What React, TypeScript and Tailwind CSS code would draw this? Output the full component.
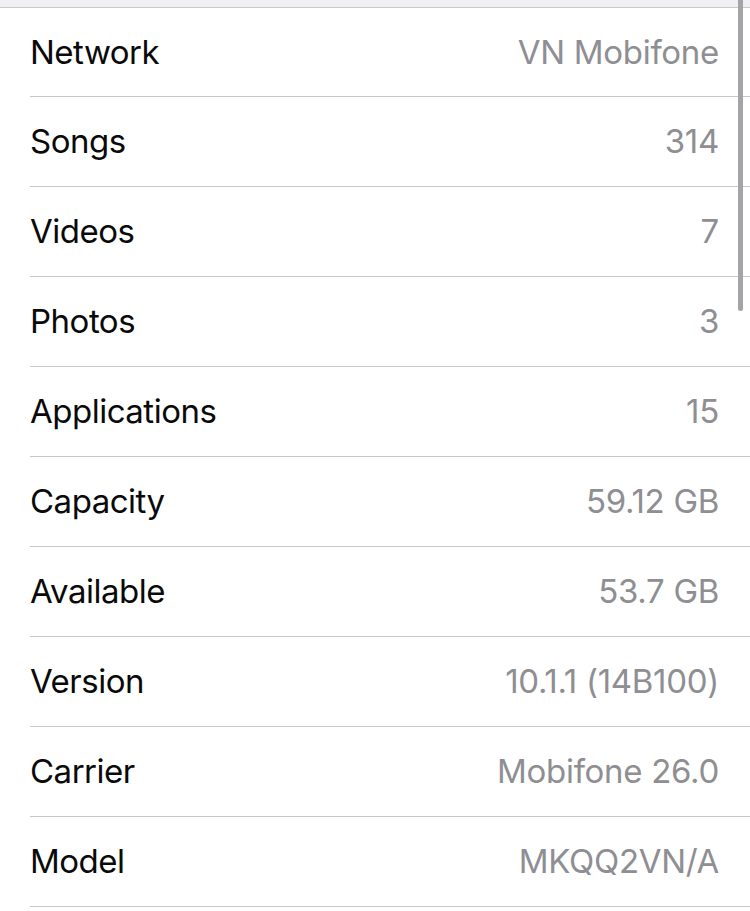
import React from "react";

const rows: [string, string][] = [
  ["Network", "VN Mobifone"],
  ["Songs", "314"],
  ["Videos", "7"],
  ["Photos", "3"],
  ["Applications", "15"],
  ["Capacity", "59.12 GB"],
  ["Available", "53.7 GB"],
  ["Version", "10.1.1 (14B100)"],
  ["Carrier", "Mobifone 26.0"],
  ["Model", "MKQQ2VN/A"],
];

export default function App() {
  return (
    <div
      className="relative w-[750px] h-[911px] overflow-hidden bg-white"
      style={{ fontFamily: "Inter, 'Liberation Sans', sans-serif" }}
    >
      <div className="h-[8px] bg-[#efeff4] border-b border-[#c8c7cc]" />
      <div className="pl-[30px]">
        {rows.map(([label, value], i) => (
          <div
            key={label}
            className={`flex items-center justify-between border-b border-[#c8c7cc] pr-[31px] ${
              i === 0 ? "h-[89px]" : "h-[90px]"
            }`}
          >
            <span className="text-[33px] leading-none text-[#0a0a0a] tracking-[-0.5px]">
              {label}
            </span>
            <span className="text-[33px] leading-none text-[#8e8e93] tracking-[-0.3px]">
              {value}
            </span>
          </div>
        ))}
      </div>
      <div className="absolute left-[738px] top-0 w-[5px] h-[311px] rounded-b-full bg-[#a4a4a6]" />
    </div>
  );
}
